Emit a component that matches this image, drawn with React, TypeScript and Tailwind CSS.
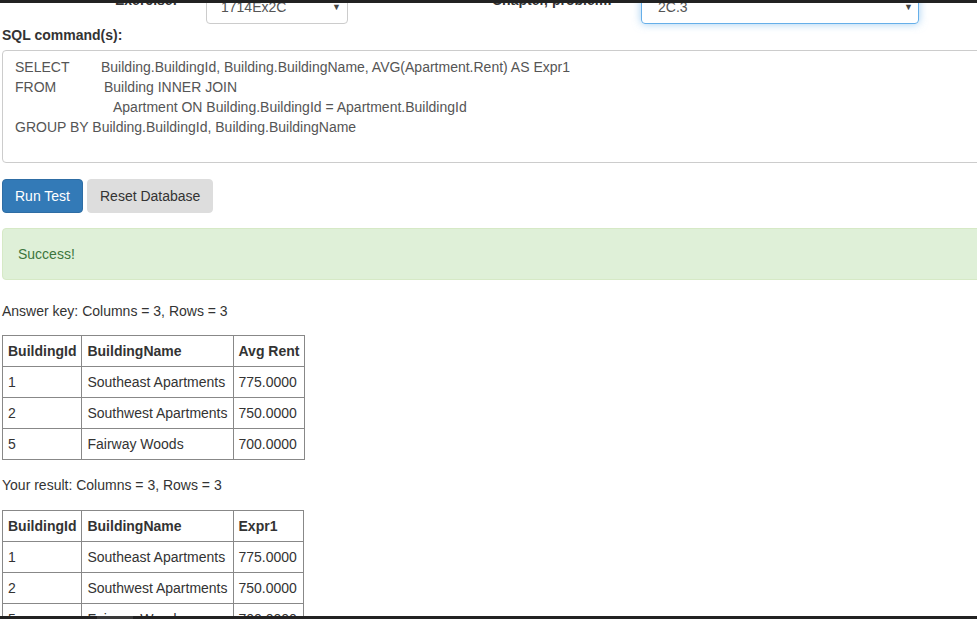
const answerRows = [
  ["1", "Southeast Apartments", "775.0000"],
  ["2", "Southwest Apartments", "750.0000"],
  ["5", "Fairway Woods", "700.0000"],
];

function ResultTable({ third }: { third: string }) {
  return (
    <table className="border-collapse border border-[#888]">
      <thead>
        <tr>
          <th className="border border-[#888] p-[5px] text-left font-bold">BuildingId</th>
          <th className="border border-[#888] p-[5px] text-left font-bold">BuildingName</th>
          <th className="border border-[#888] p-[5px] text-left font-bold">{third}</th>
        </tr>
      </thead>
      <tbody>
        {answerRows.map((r) => (
          <tr key={r[0]}>
            <td className="border border-[#888] p-[5px]">{r[0]}</td>
            <td className="border border-[#888] p-[5px]">{r[1]}</td>
            <td className="border border-[#888] p-[5px] pr-[6px]">{r[2]}</td>
          </tr>
        ))}
      </tbody>
    </table>
  );
}

export default function App() {
  return (
    <div className="h-screen w-full flex flex-col overflow-hidden bg-white font-['Liberation_Sans',Arial,sans-serif] text-[14px] leading-[20px] text-[#333]">
      {/* top edge */}
      <div className="h-[3px] shrink-0 bg-[#222]" />

      <div className="flex-1 overflow-hidden">
        <div className="-mt-[13px] pl-[2px] w-[1100px]">
          {/* exercise / chapter row */}
          <div className="flex items-start h-[34px]">
            <div className="w-[204px] pl-[113px] font-bold">Exercise:</div>
            <div className="w-[142px] h-[34px] border border-[#ccc] rounded-[4px] pl-[14px] pr-[6px] py-[6px] text-[#555] flex items-center justify-between">
              <span>1714Ex2C</span>
              <span className="text-[9px] leading-none text-[#444]">▼</span>
            </div>
            <div className="w-[293px] pl-[144px] font-bold">Chapter, problem:</div>
            <div className="w-[278px] h-[34px] border border-[#66afe9] rounded-[4px] shadow-[0_0_8px_rgba(102,175,233,0.6)] pl-[16px] pr-[5px] py-[6px] text-[#555] flex items-center justify-between">
              <span>2C.3</span>
              <span className="text-[9px] leading-none text-[#444]">▼</span>
            </div>
          </div>

          <div className="mt-[1px] font-bold">SQL command(s):</div>

          {/* sql textarea */}
          <div className="mt-[5px] h-[113px] w-[1000px] border border-[#ccc] rounded-[4px] px-[12px] py-[6px] text-[#555] whitespace-nowrap">
            <div>
              <span className="inline-block w-[86px]">SELECT</span>Building.BuildingId, Building.BuildingName, AVG(Apartment.Rent) AS Expr1
            </div>
            <div>
              <span className="inline-block w-[89px]">FROM</span>Building INNER JOIN
            </div>
            <div>
              <span className="inline-block w-[98px]" />Apartment ON Building.BuildingId = Apartment.BuildingId
            </div>
            <div>GROUP BY Building.BuildingId, Building.BuildingName</div>
          </div>

          {/* buttons */}
          <div className="mt-[16px] flex gap-[4px]">
            <button className="h-[34px] px-[12px] border border-[#2e6da4] bg-[#337ab7] text-white rounded-[4px]">
              Run Test
            </button>
            <button className="h-[34px] px-[12px] border border-[#ddd] bg-[#ddd] text-[#333] rounded-[4px]">
              Reset Database
            </button>
          </div>

          {/* alert */}
          <div className="mt-[15px] w-[1000px] border border-[#d6e9c6] bg-[#dff0d8] text-[#3c763d] rounded-[4px] px-[15px] py-[15px]">
            Success!
          </div>

          <div className="mt-[21px]">Answer key: Columns = 3, Rows = 3</div>
          <div className="mt-[14px]">
            <ResultTable third="Avg Rent" />
          </div>

          <div className="mt-[15px]">Your result: Columns = 3, Rows = 3</div>
          <div className="mt-[15px]">
            <ResultTable third="Expr1" />
          </div>
        </div>
      </div>

      {/* bottom edge / scrollbar */}
      <div className="h-[3px] shrink-0 bg-[#222] flex">
        <div className="ml-[97px] w-[36px] bg-[#3a3a3a]" />
      </div>
    </div>
  );
}
